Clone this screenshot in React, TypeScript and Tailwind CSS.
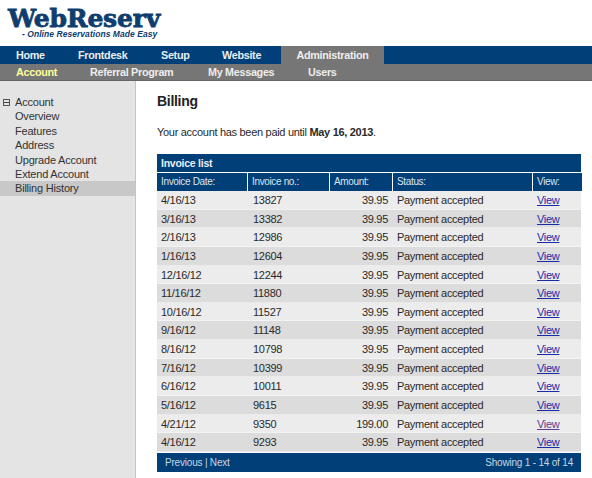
import React from "react";

const nav = [
  { label: "Home", w: "w-[62px] pl-[16px]" },
  { label: "Frontdesk", w: "w-[99px] pl-[16px]" },
  { label: "Setup", w: "w-[61px] pl-[0px]" },
  { label: "Website", w: "w-[59px] pl-[0px]" },
];

const subNav = [
  { label: "Account", cls: "w-[90px] pl-[16px] text-[#ffff99]" },
  { label: "Referral Program", cls: "w-[118px] text-[#eeeeee]" },
  { label: "My Messages", cls: "w-[100px] text-[#eeeeee]" },
  { label: "Users", cls: "text-[#eeeeee]" },
];

const side = ["Overview", "Features", "Address", "Upgrade Account", "Extend Account"];

const rows = [
  ["4/16/13", "13827", "39.95"],
  ["3/16/13", "13382", "39.95"],
  ["2/16/13", "12986", "39.95"],
  ["1/16/13", "12604", "39.95"],
  ["12/16/12", "12244", "39.95"],
  ["11/16/12", "11880", "39.95"],
  ["10/16/12", "11527", "39.95"],
  ["9/16/12", "11148", "39.95"],
  ["8/16/12", "10798", "39.95"],
  ["7/16/12", "10399", "39.95"],
  ["6/16/12", "10011", "39.95"],
  ["5/16/12", "9615", "39.95"],
  ["4/21/12", "9350", "199.00"],
  ["4/16/12", "9293", "39.95"],
];

const cols = "grid grid-cols-[90px_81px_62px_139px_49px] gap-x-px";

export default function App() {
  return (
    <div className="w-[592px] h-[478px] overflow-hidden bg-white flex flex-col text-[11px] tracking-[-0.3px] text-[#2a2a2a] font-['Liberation_Sans',Arial,sans-serif]">
      <header className="h-[46px] pl-[8px] pt-[8px] flex flex-col">
        <div className="h-[21px] leading-[21px] text-[#0e3d6e] text-[25px] font-black font-['DejaVu_Serif',serif] tracking-[-0.2px] [-webkit-text-stroke:0.8px_#0e3d6e]">
          WebReserv
        </div>
        <div className="pl-[14px] h-[11px] leading-[11px] text-[8.5px] font-bold italic text-[#0e3d6e] tracking-[0.05px]">
          - Online Reservations Made Easy
        </div>
      </header>

      <nav className="h-[18px] bg-[#003f77] flex items-center font-bold text-[#e8eef4] text-[10.8px] tracking-[-0.3px] leading-[19px]">
        {nav.map((n) => (
          <div key={n.label} className={n.w}>
            {n.label}
          </div>
        ))}
        <div className="w-[103px] h-full bg-[#767676] flex items-center justify-center text-[#eeeeee]">
          Administration
        </div>
      </nav>

      <nav className="h-[17px] pt-px bg-[#767676] border-b border-[#666666] flex items-center font-bold text-[10.8px] tracking-[-0.3px] leading-[19px]">
        {subNav.map((n) => (
          <div key={n.label} className={n.cls}>
            {n.label}
          </div>
        ))}
      </nav>

      <div className="flex-1 flex min-h-0">
        <aside className="w-[136px] shrink-0 bg-[#e4e4e4] border-r border-[#c4c4c4] pt-[14px] text-[#333333] leading-[14.4px] text-[11px] tracking-[-0.2px]">
          <div className="flex items-center pl-[3px] gap-[5px] h-[14.4px]">
            <span className="w-[7px] h-[7px] border border-[#555555] flex items-center justify-center">
              <span className="w-[5px] h-px bg-[#444444]" />
            </span>
            <span>Account</span>
          </div>
          {side.map((s) => (
            <div key={s} className="pl-[15px] h-[14.4px]">
              {s}
            </div>
          ))}
          <div className="pl-[15px] h-[14.6px] bg-[#c8c8c8]">Billing History</div>
        </aside>

        <main className="flex-1 pl-[21px] pt-[12px]">
          <h1 className="h-[17px] leading-[17px] text-[14px] tracking-[-0.3px] font-bold text-[#222222]">Billing</h1>
          <p className="mt-[15px] h-[14px] leading-[14px]">
            Your account has been paid until <b>May 16, 2013</b>.
          </p>
          <div className="mt-[15px] w-[424px] flex flex-col">
            <div className="h-[18px] leading-[18px] pl-[4px] bg-[#003f77] text-[#e8eef4] font-bold text-[10.5px] tracking-[-0.25px]">
              Invoice list
            </div>
            <div className={`${cols} mt-px h-[18px] leading-[17px] text-[10px] tracking-[-0.35px] text-[#dce5ee]`}>
              {["Invoice Date:", "Invoice no.:", "Amount:", "Status:", "View:"].map((h) => (
                <div key={h} className="bg-[#003f77] pl-[4px]">
                  {h}
                </div>
              ))}
            </div>
            {rows.map((r, i) => (
              <div
                key={r[1]}
                className={`${cols} h-[18.65px] leading-[18.4px] ${i % 2 ? "bg-[#dcdcdc]" : "bg-[#ececec]"} border-b border-white/40`}
              >
                <div className="pl-[4px]">{r[0]}</div>
                <div className="pl-[5px]">{r[1]}</div>
                <div className="pr-[4px] text-right">{r[2]}</div>
                <div className="pl-[4px]">Payment accepted</div>
                <div className="pl-[4px]">
                  <a href="#" className={`underline ${i === 12 ? "text-[#5a3d8f]" : "text-[#1a2ba8]"}`}>
                    View
                  </a>
                </div>
              </div>
            ))}
            <div className="h-[19px] mt-px bg-[#003f77] flex items-center justify-between pl-[8px] pr-[8px] text-[10px] tracking-[-0.2px] text-[#c9d6e3]">
              <span>Previous | Next</span>
              <span>Showing 1 - 14 of 14</span>
            </div>
          </div>
        </main>
      </div>
    </div>
  );
}
